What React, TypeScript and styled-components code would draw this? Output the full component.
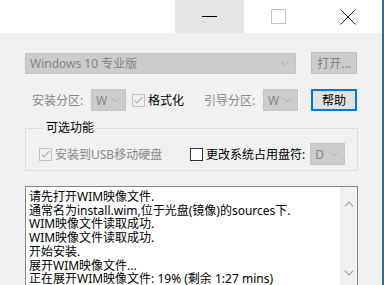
import React from "react";
import styled, { createGlobalStyle } from "styled-components";

const GlobalStyle = createGlobalStyle`
  * { box-sizing: border-box; }
  html, body { margin: 0; padding: 0; background: #f0f0f0; }
  body {
    font-family: "Noto Sans", "Noto Sans CJK SC", sans-serif;
    font-size: 12px;
    color: #000;
  }
`;

const Window = styled.div`
  width: 384px;
  height: 285px;
  overflow: hidden;
  background: #f0f0f0;
  border-right: 2px solid #2f6f90;
  display: flex;
  flex-direction: column;
`;

const TitleBar = styled.div`
  height: 33px;
  flex-shrink: 0;
  background: #fff;
  display: flex;
  justify-content: flex-end;
`;

const CaptionButton = styled.div<{ $hover?: boolean }>`
  width: 69px;
  height: 33px;
  display: flex;
  align-items: center;
  justify-content: center;
  background: ${(p) => (p.$hover ? "#e5e5e5" : "transparent")};
`;

const Body = styled.div`
  flex: 1;
  display: flex;
  flex-direction: column;
  padding: 19px 24px 0 25px;
  min-height: 0;
`;

const Row = styled.div<{ $mt?: number }>`
  display: flex;
  align-items: center;
  margin-top: ${(p) => p.$mt ?? 0}px;
`;

const Combo = styled.div<{ $w: number; $h?: number; $ml?: number }>`
  width: ${(p) => p.$w}px;
  height: ${(p) => p.$h ?? 22}px;
  margin-left: ${(p) => p.$ml ?? 0}px;
  flex-shrink: 0;
  background: #cccccc;
  border: 1px solid #c4c4c4;
  color: #838383;
  display: flex;
  align-items: center;
  justify-content: space-between;
  padding: 0 6px 0 4px;
  font-size: 12px;
`;

const Button = styled.div<{ $default?: boolean; $disabled?: boolean }>`
  width: 46px;
  height: 22px;
  margin-left: auto;
  margin-right: 1px;
  flex-shrink: 0;
  display: flex;
  align-items: center;
  justify-content: center;
  background: ${(p) => (p.$disabled ? "#cccccc" : "#e1e1e1")};
  border: ${(p) =>
    p.$default ? "2px solid #0078d7" : p.$disabled ? "1px solid #bfbfbf" : "1px solid #adadad"};
  color: ${(p) => (p.$disabled ? "#838383" : "#000")};
`;

const Label = styled.span<{ $w?: number; $ml?: number; $muted?: boolean }>`
  display: inline-block;
  width: ${(p) => (p.$w ? `${p.$w}px` : "auto")};
  margin-left: ${(p) => p.$ml ?? 0}px;
  flex-shrink: 0;
  white-space: nowrap;
  color: ${(p) => (p.$muted ? "#8a8a8a" : "#000")};
`;

const CheckItem = styled.div<{ $w?: number; $ml?: number }>`
  display: flex;
  align-items: center;
  gap: 3px;
  width: ${(p) => (p.$w ? `${p.$w}px` : "auto")};
  margin-left: ${(p) => p.$ml ?? 0}px;
  flex-shrink: 0;
`;

const Box = styled.div<{ $disabled?: boolean }>`
  width: 13px;
  height: 13px;
  flex-shrink: 0;
  border: 1px solid ${(p) => (p.$disabled ? "#c2c2c2" : "#333")};
  background: ${(p) => (p.$disabled ? "#f0f0f0" : "#fff")};
  display: flex;
  align-items: center;
  justify-content: center;
`;

const Group = styled.fieldset`
  margin: 9px 0 0;
  padding: 7px 10px 5px 13px;
  border: 1px solid #dcdcdc;
  min-width: 0;
`;

const Legend = styled.legend`
  margin-left: 5px;
  padding: 0 2px;
  line-height: 16px;
`;

const LogBox = styled.div`
  margin-top: 15px;
  flex: 1;
  min-height: 0;
  display: flex;
  background: #fff;
  border: 1px solid #828790;
  border-bottom: none;
`;

const LogText = styled.div`
  flex: 1;
  padding: 3px 3px;
  line-height: 13.7px;
  white-space: nowrap;
  overflow: hidden;
`;

const ScrollBar = styled.div`
  width: 17px;
  background: #f0f0f0;
  display: flex;
  flex-direction: column;
  justify-content: space-between;
  align-items: center;
  padding: 14px 0 9px;
`;

const Chevron = ({ up, color = "#a6a6a6", w = 8 }: { up?: boolean; color?: string; w?: number }) => (
  <svg width={w} height={w / 2 + 1} viewBox="0 0 8 5">
    <path
      d={up ? "M0.5 4.5 L4 1 L7.5 4.5" : "M0.5 0.5 L4 4 L7.5 0.5"}
      fill="none"
      stroke={color}
      strokeWidth="1"
    />
  </svg>
);

const Check = ({ checked, disabled }: { checked?: boolean; disabled?: boolean }) => (
  <Box $disabled={disabled}>
    {checked && (
      <svg width="11" height="11" viewBox="0 0 11 11">
        <path d="M1.5 5.5 L4 8 L9.5 2" fill="none" stroke={disabled ? "#b5b5b5" : "#000"} strokeWidth="1.2" />
      </svg>
    )}
  </Box>
);

const logLines = [
  "请先打开WIM映像文件.",
  "通常名为install.wim,位于光盘(镜像)的sources下.",
  "WIM映像文件读取成功.",
  "WIM映像文件读取成功.",
  "开始安装.",
  "展开WIM映像文件...",
  "正在展开WIM映像文件: 19% (剩余 1:27 mins)",
];

export default function App() {
  return (
    <>
      <GlobalStyle />
      <Window>
        <TitleBar>
          <CaptionButton $hover>
            <svg width="15" height="15" viewBox="0 0 15 15">
              <line x1="0" y1="7.5" x2="15" y2="7.5" stroke="#000" strokeWidth="1" />
            </svg>
          </CaptionButton>
          <CaptionButton>
            <svg width="15" height="15" viewBox="0 0 15 15">
              <rect x="0.5" y="0.5" width="14" height="14" fill="none" stroke="#c4c4c4" strokeWidth="1" />
            </svg>
          </CaptionButton>
          <CaptionButton>
            <svg width="16" height="16" viewBox="0 0 16 16">
              <path d="M0.5 0.5 L15.5 15.5 M15.5 0.5 L0.5 15.5" stroke="#222" strokeWidth="1" />
            </svg>
          </CaptionButton>
        </TitleBar>
        <Body>
          <Row>
            <Combo $w={271} $h={21}>
              <span>Windows 10 专业版</span>
              <Chevron color="#b0b0b0" />
            </Combo>
            <Button $disabled>打开...</Button>
          </Row>
          <Row $mt={15}>
            <Label $w={59} $ml={7} $muted>安装分区:</Label>
            <Combo $w={35}>
              <span>W</span>
              <Chevron color="#b0b0b0" />
            </Combo>
            <CheckItem $ml={6}>
              <Check checked disabled />
              <Label>格式化</Label>
            </CheckItem>
            <Label $w={59} $ml={20} $muted>引导分区:</Label>
            <Combo $w={35}>
              <span>W</span>
              <Chevron color="#b0b0b0" />
            </Combo>
            <Button $default>帮助</Button>
          </Row>
          <Group>
            <Legend>可选功能</Legend>
            <Row>
              <CheckItem $w={151}>
                <Check checked disabled />
                <Label $muted>安装到USB移动硬盘</Label>
              </CheckItem>
              <CheckItem>
                <Check />
                <Label>更改系统占用盘符:</Label>
              </CheckItem>
              <Combo $w={35} $ml={5}>
                <span>D</span>
                <Chevron color="#b0b0b0" />
              </Combo>
            </Row>
          </Group>
          <LogBox>
            <LogText>
              {logLines.map((l, i) => (
                <div key={i}>{l}</div>
              ))}
            </LogText>
            <ScrollBar>
              <Chevron up color="#a3a3a3" w={10} />
              <Chevron color="#a3a3a3" w={10} />
            </ScrollBar>
          </LogBox>
        </Body>
      </Window>
    </>
  );
}
